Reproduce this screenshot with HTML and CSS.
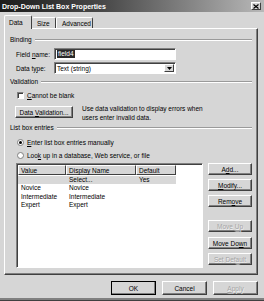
FILE: index.html
```html
<!DOCTYPE html>
<html lang="en">
<head>
    <meta charset="UTF-8">
    <title>Drop-Down List Box Properties</title>
    <link rel="stylesheet" href="styles.css">
</head>
<body>
    <div class="window">
        <div class="titlebar">
            <span class="title">Drop-Down List Box Properties</span>
            <span class="close">
                <svg width="6" height="5" viewBox="0 0 6 5"><path d="M0.5 0.5 L5.5 4.5 M5.5 0.5 L0.5 4.5" stroke="#000" stroke-width="1.2"/></svg>
            </span>
        </div>

        <div class="tabs">
            <div class="tab active">Data</div>
            <div class="tab">Size</div>
            <div class="tab">Advanced</div>
        </div>

        <div class="panel">
            <div class="group-title">Binding</div>
            <div class="field-row">
                <label>Field <u>n</u>ame:</label>
                <div class="input"><span class="selected">field4</span></div>
            </div>
            <div class="field-row tight">
                <label>Data t<u>y</u>pe:</label>
                <div class="input select">
                    <span class="value">Text (string)</span>
                    <span class="drop"><svg width="5" height="3" viewBox="0 0 5 3"><path d="M0 0 H5 L2.5 3 Z" fill="#000"/></svg></span>
                </div>
            </div>

            <div class="group-title">Validation</div>
            <div class="check-row">
                <span class="checkbox"></span>
                <span><u>C</u>annot be blank</span>
            </div>
            <div class="valid-row">
                <button class="btn wide">Data <u>V</u>alidation...</button>
                <p class="hint">Use data validation to display errors when<br>users enter invalid data.</p>
            </div>

            <div class="group-title entries-title">List box entries</div>
            <div class="radio-row">
                <span class="radio on"></span>
                <span><u>E</u>nter list box entries manually</span>
            </div>
            <div class="radio-row second">
                <span class="radio"></span>
                <span>Loo<u>k</u> up in a database, Web service, or file</span>
            </div>

            <div class="entries">
                <div class="list">
                    <div class="list-head">
                        <div class="col c1">Value</div>
                        <div class="col c2">Display Name</div>
                        <div class="col c3">Default</div>
                    </div>
                    <div class="list-row current">
                        <div class="c1"></div>
                        <div class="c2">Select...</div>
                        <div class="c3">Yes</div>
                    </div>
                    <div class="list-row">
                        <div class="c1">Novice</div>
                        <div class="c2">Novice</div>
                        <div class="c3"></div>
                    </div>
                    <div class="list-row">
                        <div class="c1">Intermediate</div>
                        <div class="c2">Intermediate</div>
                        <div class="c3"></div>
                    </div>
                    <div class="list-row">
                        <div class="c1">Expert</div>
                        <div class="c2">Expert</div>
                        <div class="c3"></div>
                    </div>
                </div>
                <div class="side-buttons">
                    <button class="btn">A<u>d</u>d...</button>
                    <button class="btn"><u>M</u>odify...</button>
                    <button class="btn">Rem<u>o</u>ve</button>
                    <button class="btn disabled spaced">Move <u>U</u>p</button>
                    <button class="btn">Move Do<u>w</u>n</button>
                    <button class="btn disabled">Set Def<u>a</u>ult</button>
                </div>
            </div>
        </div>

        <div class="footer">
            <button class="btn big default">OK</button>
            <button class="btn big">Cancel</button>
            <button class="btn big disabled"><u>A</u>pply</button>
        </div>
    </div>
</body>
</html>
```

FILE: styles.css
```css
body {
    margin: 0;
    background: #d6d6d6;
    font-family: "Liberation Sans", Arial, sans-serif;
    font-size: 6.5px;
    color: #000;
}
u {
    text-decoration-thickness: 0.5px;
    text-underline-offset: 1px;
}
.window {
    width: 264px;
    height: 301px;
    box-sizing: border-box;
    background: #d6d6d6;
    border-bottom: 1px solid #404040;
    box-shadow: inset 0 -2px 0 #808080;
}
.titlebar {
    height: 12px;
    display: flex;
    align-items: center;
    justify-content: space-between;
    padding: 0 3px 0 2px;
    background: linear-gradient(to right, #1c1c1c, #4a4a4a 40%, #b8b8b8);
}
.title {
    color: #fff;
    font-weight: bold;
    font-size: 7px;
}
.close {
    width: 10px;
    height: 8px;
    box-sizing: border-box;
    display: flex;
    align-items: center;
    justify-content: center;
    background: #d6d6d6;
    border-top: 1px solid #fff;
    border-left: 1px solid #fff;
    border-right: 1px solid #404040;
    border-bottom: 1px solid #404040;
}

/* tabs */
.tabs {
    display: flex;
    align-items: flex-end;
    margin-top: 3px;
    padding-left: 4px;
    height: 13px;
}
.tab {
    height: 11px;
    box-sizing: border-box;
    padding: 2px 4px 0 5px;
    border-top: 1px solid #fff;
    border-left: 1px solid #fff;
    border-right: 1px solid #404040;
    border-radius: 2px 2px 0 0;
}
.tab:nth-child(2) { width: 24px; border-left: none; }
.tab:nth-child(3) { width: 37px; }
.tab.active {
    width: 28px;
    height: 14px;
    margin-bottom: -1px;
    padding: 3px 4px 0 4px;
    background: #d6d6d6;
    position: relative;
    z-index: 1;
}

/* main panel */
.panel {
    width: 254px;
    height: 247px;
    margin-left: 4px;
    box-sizing: border-box;
    padding: 7px 5px 0 5px;
    border-top: 1px solid #fff;
    border-left: 1px solid #fff;
    border-right: 1px solid #404040;
    border-bottom: 1px solid #404040;
    box-shadow: inset -1px -1px 0 #808080;
}
.group-title {
    display: flex;
    align-items: center;
    height: 8px;
    line-height: 8px;
}
.group-title::after {
    content: "";
    flex: 1;
    margin-left: 3px;
    height: 0;
    border-top: 1px solid #9a9a9a;
    border-bottom: 1px solid #fff;
}
.field-row {
    display: flex;
    align-items: center;
    margin-top: 4px;
    padding-left: 6px;
    height: 12px;
}
.field-row.tight { margin-top: 2px; }
.field-row label {
    width: 38px;
}
.input {
    width: 122px;
    height: 12px;
    box-sizing: border-box;
    display: flex;
    align-items: center;
    padding-left: 2px;
    background: #fff;
    border-top: 1px solid #808080;
    border-left: 1px solid #808080;
    border-right: 1px solid #fff;
    border-bottom: 1px solid #fff;
    box-shadow: inset 1px 1px 0 #404040;
}
.selected {
    background: #2a2a2a;
    color: #fff;
    padding: 0 1px;
    line-height: 8px;
}
.select {
    justify-content: space-between;
    padding-right: 1px;
}
.drop {
    width: 10px;
    height: 8px;
    box-sizing: border-box;
    display: flex;
    align-items: center;
    justify-content: center;
    background: #d6d6d6;
    border-top: 1px solid #fff;
    border-left: 1px solid #fff;
    border-right: 1px solid #404040;
    border-bottom: 1px solid #404040;
}

.check-row, .radio-row {
    display: flex;
    align-items: center;
    gap: 3px;
    height: 8px;
    padding-left: 7px;
}
.check-row { margin-top: 5px; }
.checkbox {
    width: 7px;
    height: 7px;
    box-sizing: border-box;
    background: #fff;
    border-top: 1px solid #808080;
    border-left: 1px solid #808080;
    border-right: 1px solid #fff;
    border-bottom: 1px solid #fff;
    box-shadow: inset 1px 1px 0 #404040;
}
.radio {
    width: 7px;
    height: 7px;
    box-sizing: border-box;
    border-radius: 50%;
    background: #fff;
    border: 1px solid #808080;
    display: flex;
    align-items: center;
    justify-content: center;
}
.radio.on::after {
    content: "";
    width: 3px;
    height: 3px;
    border-radius: 50%;
    background: #000;
}
.radio-row { margin-top: 6px; }
.radio-row.second { margin-top: 5px; }

.valid-row {
    display: flex;
    align-items: flex-start;
    margin-top: 7px;
    padding-left: 5px;
    height: 12px;
}
.hint {
    margin: -2px 0 0 9px;
    line-height: 9px;
}
.entries-title { margin-top: 6px; }
.group-title:not(:first-child):not(.entries-title) { margin-top: 4px; }

/* buttons */
.btn {
    font: inherit;
    color: #000;
    height: 12px;
    padding: 0;
    box-sizing: border-box;
    background: #d6d6d6;
    border-top: 1px solid #fff;
    border-left: 1px solid #fff;
    border-right: 1px solid #404040;
    border-bottom: 1px solid #404040;
    box-shadow: inset -1px -1px 0 #808080;
    line-height: 9px;
}
.btn.wide { width: 58px; }
.btn.disabled {
    color: #a4a4a4;
    text-shadow: 0.5px 0.5px 0 #f4f4f4;
}
.btn.big {
    width: 45px;
    height: 14px;
}
.btn.default {
    outline: 1px solid #000;
    outline-offset: -1px;
    border-right-color: #000;
    border-bottom-color: #000;
}

/* list of entries */
.entries {
    display: flex;
    margin-top: 4px;
    padding-left: 6px;
    height: 105px;
    gap: 5px;
}
.list {
    width: 187px;
    height: 105px;
    box-sizing: border-box;
    background: #fff;
    border-top: 1px solid #808080;
    border-left: 1px solid #808080;
    border-right: 1px solid #fff;
    border-bottom: 1px solid #fff;
    box-shadow: inset 1px 1px 0 #404040;
    padding: 1px 0 0 1px;
}
.list-head, .list-row {
    display: flex;
}
.list-head .col {
    height: 10px;
    box-sizing: border-box;
    padding: 1px 0 0 2px;
    line-height: 7px;
    background: #d6d6d6;
    border-top: 1px solid #fff;
    border-left: 1px solid #fff;
    border-right: 1px solid #404040;
    border-bottom: 1px solid #404040;
}
.c1 { width: 48px; }
.c2 { width: 70px; }
.c3 { width: 40px; }
.list-row div {
    height: 8.3px;
    line-height: 8.3px;
    padding-left: 3px;
    box-sizing: border-box;
    white-space: nowrap;
}
.list-row.current div {
    background: #d8d8d8;
}
.list-row.current { margin-top: 1px; }

.side-buttons {
    display: flex;
    flex-direction: column;
    gap: 4px;
}
.side-buttons .btn {
    width: 44px;
}
.side-buttons .btn.spaced {
    margin-top: 9px;
}
.side-buttons .btn.spaced + .btn {
    margin-top: 1px;
}

.footer {
    display: flex;
    justify-content: flex-end;
    gap: 6px;
    padding: 6px 6px 0 0;
}
```
